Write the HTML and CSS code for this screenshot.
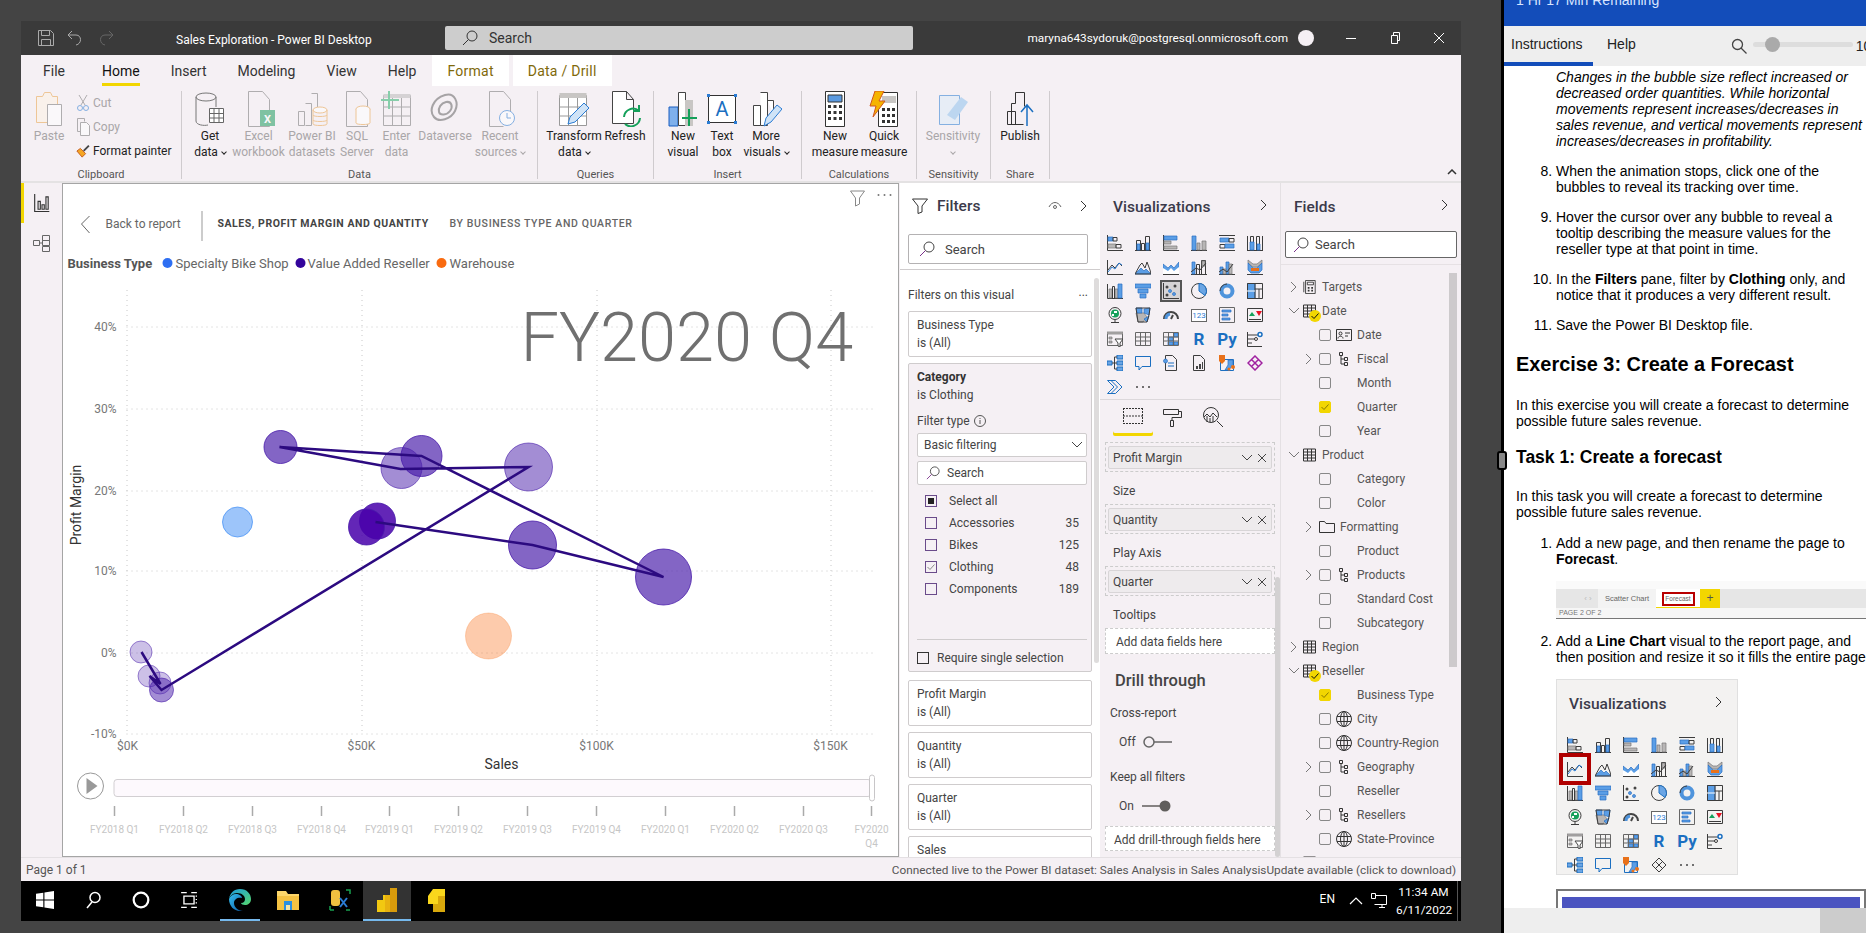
FILE: index.html
```html
<!DOCTYPE html>
<html lang="en">
<head>
    <meta charset="UTF-8">
    <title>Sales Exploration - Power BI Desktop</title>
    <link rel="stylesheet" href="styles.css">
</head>
<body>
<svg class="defs" width="0" height="0">
    <!-- visualization gallery -->
    <symbol id="v-sbar" viewBox="0 0 16 16"><path class="i-l" d="M.5 0v15.500H16"/><path class="i-b" d="M1 2h5v4H1z"/><path class="i-l" d="M6 2.500h4v3.500H6z"/><path class="i-g" d="M1 9h8v4H1z"/><path class="i-l" d="M9 9.500h5v3.500H9z"/></symbol>
    <symbol id="v-scol" viewBox="0 0 16 16"><path class="i-l" d="M0 15.500h16"/><path class="i-l" d="M1.500 5.500h4v10h-4zM10.500 1.500h4v14h-4z"/><path class="i-b" d="M2 9h3v6H2zM11 8h3v7h-3z"/><path class="i-l" d="M6.500 8.500h3v7h-3z"/></symbol>
    <symbol id="v-cbar" viewBox="0 0 16 16"><path class="i-l" d="M.5 0v15.500H16"/><path class="i-b" d="M1 1h13v4H1z"/><path class="i-g" d="M1 6h7v3H1z"/><path class="i-g" d="M1 11h13v3H1z"/></symbol>
    <symbol id="v-ccol" viewBox="0 0 16 16"><path class="i-l" d="M0 15.500h16"/><path class="i-b" d="M1 1h4v14H1z"/><path class="i-g" d="M6 8h3v7H6zM11 6h4v9h-4z"/></symbol>
    <symbol id="v-pbar" viewBox="0 0 16 16"><path class="i-l" d="M0 .5h16M0 15.500h16"/><path class="i-b" d="M1 3h9v4H1z"/><path class="i-l" d="M10 3.500h5v3.500h-5zM1 9.500h5v3.500H1z"/><path class="i-b" d="M6 9h9v4H6z"/></symbol>
    <symbol id="v-pcol" viewBox="0 0 16 16"><path class="i-l" d="M0 15.500h16M.5 1v14M15.500 1v14"/><path class="i-l" d="M3.500 1.500h3v14h-3zM9.500 1.500h3v14h-3z"/><path class="i-b" d="M3 7h4v8H3zM10 9h3v6h-3z"/></symbol>
    <symbol id="v-line" viewBox="0 0 16 16"><path class="i-l" d="M.5 1v14.500H16"/><path class="i-l" d="M1 11l4-5 3 3 4-5 3 3"/><path class="i-ll" d="M1 13l4-5 3 2 4-6 3 2"/></symbol>
    <symbol id="v-area" viewBox="0 0 16 16"><path class="i-b" d="M0 15l6-6 3 3 2-2 5 5z"/><path class="i-l" d="M0 15l5-9 2-2 3 5 2-6 3 8 1 4z"/></symbol>
    <symbol id="v-sarea" viewBox="0 0 16 16"><path class="i-b" d="M0 5l5 4 3-3 3 3 5-6v12H0z"/><path class="i-w" d="M0 9l5 3 3-3 3 3 5-4v8H0z"/><path class="i-l" d="M0 15.500h16"/></symbol>
    <symbol id="v-lcol" viewBox="0 0 16 16"><path class="i-l" d="M0 15.500h16"/><path class="i-b" d="M1 3h3v12H1z"/><path class="i-l" d="M5.500 5.500h3v10h-3zM10.500 1.500h4v14h-4z"/><path class="i-g" d="M11 2h3v5h-3z"/><path class="i-l" d="M0 13l5-4 4 2 6-7"/></symbol>
    <symbol id="v-lclu" viewBox="0 0 16 16"><path class="i-l" d="M0 15.500h16"/><path class="i-b" d="M1 8h3v7H1zM7 3h3v12H7z"/><path class="i-g" d="M4 10h3v5H4zM10 5h3v10h-3z"/><path class="i-l" d="M0 13l4-3 4 3 6-8"/></symbol>
    <symbol id="v-ribbon" viewBox="0 0 16 16"><path class="i-l" d="M0 15.500h16"/><path class="i-g" d="M1 1l5 4h4l5-4v3l-5 4H6L1 4z"/><path class="i-b" d="M1 4l5 5h4l5-5v7l-3 3H4l-3-3z"/><path class="i-o" d="M4 9h8v3H4z"/></symbol>
    <symbol id="v-water" viewBox="0 0 16 16"><path class="i-l" d="M.5 1v14.500H16"/><path class="i-g" d="M2 6h3v9H2zM8 6h3v9H8z"/><path class="i-l" d="M5.500 3.500h2v12h-2z"/><path class="i-b" d="M11 1h4v14h-4z"/></symbol>
    <symbol id="v-funnel" viewBox="0 0 16 16"><path class="i-b" d="M0 1h16v4H0zM3 6h10v4H3zM5 11h6v4H5z"/></symbol>
    <symbol id="v-scatter" viewBox="0 0 16 16"><path class="i-l" d="M.5 0v15.500H16"/><circle class="i-d" cx="4" cy="12" r="1.500"/><circle class="i-b" cx="7" cy="8" r="1.500"/><circle class="i-b" cx="11" cy="11" r="1.500"/><circle class="i-d" cx="4" cy="4" r="1.500"/><circle class="i-d" cx="12" cy="3" r="1.500"/></symbol>
    <symbol id="v-pie" viewBox="0 0 16 16"><circle class="i-l" cx="8" cy="8" r="7.500"/><path class="i-bs" d="M8 .5a7.500 7.500 0 0 1 6 12L8 8z"/></symbol>
    <symbol id="v-donut" viewBox="0 0 16 16"><circle class="i-dn" cx="8" cy="8" r="5.500"/><path class="i-l" d="M8 1a7 7 0 0 0-7 7"/></symbol>
    <symbol id="v-tree" viewBox="0 0 16 16"><path class="i-b" d="M0 0h8v16H0z"/><path class="i-l" d="M.5.5h15v15H.5zM8 .5v15M8 6h7.500M12 6v10"/><path class="i-lw" d="M0 8h8"/></symbol>
    <symbol id="v-globe" viewBox="0 0 16 16"><circle class="i-l" cx="8" cy="6.500" r="6"/><circle class="i-gn" cx="8" cy="6.500" r="4"/><path class="i-w" d="M7 4h3v2H7zM5 7h2v2H5z"/><path class="i-l" d="M4 15.500h8M8 13v2"/></symbol>
    <symbol id="v-fmap" viewBox="0 0 16 16"><path class="i-g" d="M1 6h8l3 4-4 5H3z"/><path class="i-b" d="M1 1h6v5H2zM9 2l6-1-1 7-5-2zM9 12l5-3-2 6z"/><path class="i-l" d="M1 1h14l-1 7-2 7H3z"/></symbol>
    <symbol id="v-gauge" viewBox="0 0 16 16"><path class="i-l2" d="M1 12a7 7 0 0 1 14 0"/><path class="i-b2" d="M3 12a5 5 0 0 1 4-5"/><path class="i-l2" d="M8 12l2-4"/></symbol>
    <symbol id="v-mcard" viewBox="0 0 16 16"><path class="i-lg" d="M.5.5h15v15H.5z"/><path class="i-b" d="M3 3h9v2H3zM3 7h6v2H3zM3 11h8v2H3z"/></symbol>
    <symbol id="v-kpi" viewBox="0 0 16 16"><path class="i-l" d="M.5 1.500h15v13H.5zM2 12.500h12"/><path class="i-gf" d="M2 9l3-4 3 4z"/><path class="i-rf" d="M9 4h6l-3 5z"/></symbol>
    <symbol id="v-slicer" viewBox="0 0 16 16"><path class="i-lg" d="M.5 1.500h15v13H.5z"/><path class="i-g" d="M0 1h16v2H0zM2 6h3v2H2zM2 10h3v2H2z"/><path class="i-lf" d="M8 8h8l-3 4v4l-2-1v-3z"/></symbol>
    <symbol id="v-table" viewBox="0 0 16 16"><path class="i-lg" d="M.5 1.500h15v13H.5zM.5 6h15M.5 10h15M5.500 1.500v13M10.500 1.500v13"/></symbol>
    <symbol id="v-matrix" viewBox="0 0 16 16"><path class="i-b" d="M5 6h5v4H5zM11 2h4v4h-4zM5 11h5v3H5zM11 11h4v3h-4z"/><path class="i-lg" d="M.5 1.500h15v13H.5zM.5 6h15M.5 10h15M5.500 1.500v13M10.500 1.500v13"/></symbol>
    <symbol id="v-key" viewBox="0 0 16 16"><path class="i-l" d="M.5 1v14.500H15M1 4h11M1 8h7M1 12h4"/><circle class="i-bc" cx="13" cy="3.500" r="2"/><circle class="i-l" cx="9" cy="8" r="1.500"/></symbol>
    <symbol id="v-decomp" viewBox="0 0 16 16"><path class="i-bs" d="M0 6h5v4H0zM10 0h6v4h-6zM10 6h6v4h-6zM10 12h6v4h-6z"/><path class="i-l" d="M5 8h5M7.500 2v12M7.500 2H10M7.500 14H10"/></symbol>
    <symbol id="v-speech" viewBox="0 0 16 16"><path class="i-ls" d="M.5 1.500h15v10H7l-3 3.500v-3.500H.5z"/></symbol>
    <symbol id="v-narr" viewBox="0 0 16 16"><path class="i-l" d="M2.500.5h7l4 4v11h-11z"/><path class="i-ls" d="M5 8h6M5 11h6"/><circle class="i-b" cx="2.500" cy="6" r="2"/></symbol>
    <symbol id="v-page" viewBox="0 0 16 16"><path class="i-l" d="M2.500.5h7l4 4v11h-11z"/><path class="i-d" d="M5 11h2v3H5zM8 9h2v5H8zM11 7h1v7h-1z"/></symbol>
    <symbol id="v-arc" viewBox="0 0 16 16"><path class="i-ls" d="M1.500 4.500h13v11h-13z"/><path class="i-b" d="M9 5l5 0v4l-4 6H6l3-5z"/><path class="i-o" d="M0 0h6v6L3 9 0 6z"/><circle class="i-o" cx="14" cy="12" r="2"/><circle class="i-o" cx="10" cy="14" r="1.500"/></symbol>
    <symbol id="v-apps" viewBox="0 0 16 16"><path class="i-pk" d="M8 1l7 7-7 7-7-7zM4.500 4.500l7 7M11.500 4.500l-7 7"/></symbol>
    <symbol id="v-diamond" viewBox="0 0 16 16"><path class="i-l" d="M8 1l7 7-7 7-7-7zM4.500 4.500l7 7M11.500 4.500l-7 7"/></symbol>
    <symbol id="v-auto" viewBox="0 0 16 16"><path class="i-ls" d="M.5 1.500h8L15 8l-6.500 6.500h-8L7 8z"/><path class="i-ls" d="M4 1.500l6.500 6.500L4 14.500"/></symbol>
    <symbol id="v-more" viewBox="0 0 16 16"><circle class="i-d" cx="2" cy="8" r="1"/><circle class="i-d" cx="8" cy="8" r="1"/><circle class="i-d" cx="14" cy="8" r="1"/></symbol>

    <!-- fields and panes -->
    <symbol id="i-chev-r" viewBox="0 0 12 12"><path d="M3 1l5 5-5 5" fill="none" stroke="currentColor"/></symbol>
    <symbol id="i-chev-d" viewBox="0 0 12 12"><path d="M1 3l5 5 5-5" fill="none" stroke="currentColor"/></symbol>
    <symbol id="i-x" viewBox="0 0 12 12"><path d="M2 2l8 8M10 2l-8 8" fill="none" stroke="currentColor"/></symbol>
    <symbol id="i-search" viewBox="0 0 16 16"><circle cx="10" cy="6" r="5" fill="none" stroke="#444"/><path d="M6.500 9.500L1 15" stroke="#7a2f8a" fill="none"/></symbol>
    <symbol id="i-funnel" viewBox="0 0 16 16"><path d="M.5 1h15L10 8v6l-4 1.500V8z" fill="none" stroke="currentColor"/></symbol>
    <symbol id="i-tbl" viewBox="0 0 13 13"><path d="M.5.5h12v12H.5zM.5 3.500h12M.5 6.500h12M.5 9.500h12M4.500.5v12M8.500.5v12" fill="none" stroke="#333"/></symbol>
    <symbol id="i-calc" viewBox="0 0 14 16"><path d="M2.500.5h11v15h-11zM.5 2v12" fill="none" stroke="#333"/><path d="M4.500 2.500h7v3h-7z" fill="none" stroke="#333"/><path d="M5 8h2v2H5zM9 8h2v2H9zM5 11h2v2H5zM9 11h2v2H9z" fill="#333"/></symbol>
    <symbol id="i-hier" viewBox="0 0 12 14"><path d="M1.500.5h3v3h-3zM6.500 5.500h3v3h-3zM6.500 10.500h3v3h-3zM3 3.500V12h3.500M3 7h3.500" fill="none" stroke="#333"/></symbol>
    <symbol id="i-folder" viewBox="0 0 16 12"><path d="M.5 11.500V.5h5l1.500 2h8.500v9z" fill="none" stroke="#333"/></symbol>
    <symbol id="i-globe" viewBox="0 0 16 16"><circle cx="8" cy="8" r="7.500" fill="none" stroke="#333"/><ellipse cx="8" cy="8" rx="3.500" ry="7.500" fill="none" stroke="#333"/><path d="M1 5.500h14M1 10.500h14M8 .5v15" fill="none" stroke="#333"/></symbol>
    <symbol id="i-idcard" viewBox="0 0 16 12"><path d="M.5.5h15v11H.5z" fill="none" stroke="#333"/><circle cx="4.500" cy="4.500" r="1.500" fill="none" stroke="#333"/><path d="M2 9.500c0-3 5-3 5 0M9 4h5M9 7h3" fill="none" stroke="#333"/></symbol>
    <symbol id="i-check" viewBox="0 0 12 12"><path d="M2.500 6l2.500 2.500 4.500-5" fill="none" stroke="currentColor"/></symbol>
</svg>

<div class="desktop">
    <div class="pbi">
        <header class="titlebar">
            <svg class="tb-ico" viewBox="0 0 16 16"><path d="M.5.5h12l3 3v12H.5zM3.500.5v5h8v-5M3.500 15.500v-6h9v6" fill="none" stroke="#aaa"/></svg>
            <svg class="tb-ico tb-undo" viewBox="0 0 16 16"><path d="M5 1L1 5l4 4M1 5h8c6 0 6 9 0 10" fill="none" stroke="#aaa"/></svg>
            <svg class="tb-ico tb-redo" viewBox="0 0 16 16"><path d="M11 1l4 4-4 4M15 5H7c-6 0-6 9 0 10" fill="none" stroke="#666"/></svg>
            <span class="tb-title">Sales Exploration - Power BI Desktop</span>
            <div class="tb-search">
                <svg class="tb-lens" viewBox="0 0 16 16"><circle cx="10" cy="6" r="5" fill="none" stroke="#333"/><path d="M6.500 9.500L1 15" stroke="#333"/></svg>
                <span>Search</span>
            </div>
            <span class="tb-user">maryna643sydoruk@postgresql.onmicrosoft.com</span>
            <span class="tb-avatar"></span>
            <span class="tb-ctl"><svg viewBox="0 0 12 12"><path d="M1 6.500h10" stroke="#fff"/></svg></span>
            <span class="tb-ctl"><svg viewBox="0 0 12 12"><path d="M2.500 3.500h6v8h-6zM4.500 3.500v-3h6v8h-2" fill="none" stroke="#fff"/></svg></span>
            <span class="tb-ctl"><svg viewBox="0 0 12 12"><path d="M1 1l10 10M11 1L1 11" stroke="#fff"/></svg></span>
        </header>

        <nav class="ribbon-tabs">
            <span class="rtab">File</span>
            <span class="rtab rtab-home">Home</span>
            <span class="rtab">Insert</span>
            <span class="rtab">Modeling</span>
            <span class="rtab">View</span>
            <span class="rtab">Help</span>
            <span class="rtab rtab-ctx rtab-format">Format</span>
            <span class="rtab rtab-ctx rtab-drill">Data / Drill</span>
        </nav>

        <div class="ribbon">
            <section class="rgroup g-clip">
                <div class="rbtns">
                    <div class="rbtn w44 off">
                        <svg class="ricon" viewBox="0 0 32 36"><path d="M3.500 5.500h6l2-4h6l2 4h5v8h-6v18h-15z" fill="#fdf3e4" stroke="#e9a44c"/><path d="M14.500 13.500h14v21h-14z" fill="#fff" stroke="#777"/></svg>
                        <span>Paste</span>
                    </div>
                    <div class="rsmall">
                        <div class="rs-row off"><svg viewBox="0 0 14 18"><path d="M3 1l6 10M11 1L5 11" stroke="#777" fill="none"/><circle cx="4" cy="14" r="2.500" fill="none" stroke="#2b7cd3"/><circle cx="10" cy="14" r="2.500" fill="none" stroke="#2b7cd3"/></svg><span>Cut</span></div>
                        <div class="rs-row off"><svg viewBox="0 0 14 18"><path d="M1.500.5h7v3M1.500.5v13h3" fill="none" stroke="#777"/><path d="M4.500 4.500h6l3 3v10h-9z" fill="#fff" stroke="#777"/></svg><span>Copy</span></div>
                        <div class="rs-row"><svg viewBox="0 0 16 16"><path d="M1 8l6 7 4-4-6-6z" fill="#f5a623" stroke="#c0561c"/><path d="M8 7l6-6 1.500 1.500-6 6z" fill="#444"/></svg><span>Format painter</span></div>
                    </div>
                </div>
                <div class="rlabel">Clipboard</div>
            </section>

            <section class="rgroup g-data">
                <div class="rbtns">
                    <div class="rbtn w44">
                        <svg class="ricon" viewBox="0 0 32 36"><ellipse cx="12" cy="6" rx="10" ry="4" fill="none" stroke="#777"/><path d="M2 6v24c0 4 8 5 12 4M22 6v10" fill="none" stroke="#777"/><path d="M15.500 17.500h14v14h-14zM15.500 22.500h14M15.500 27h14M20 17.500v14M25 17.500v14" fill="#fff" stroke="#666"/></svg>
                        <span>Get<br>data<i class="caret"></i></span>
                    </div>
                    <div class="rbtn w53 off">
                        <svg class="ricon" viewBox="0 0 32 36"><path d="M5.500.5h14l7 8v27h-21z" fill="none" stroke="#777"/><path d="M17 19h15v16H17z" fill="#1f9d60"/><text class="xls" x="24.500" y="32" text-anchor="middle">X</text></svg>
                        <span>Excel<br>workbook</span>
                    </div>
                    <div class="rbtn w54 off">
                        <svg class="ricon" viewBox="0 0 32 36"><path d="M15.500 2.500h6v14M9.500 12.500h6v22h-6M2.500 20.500h6v14h-6z" fill="none" stroke="#777"/><ellipse cx="24" cy="19" rx="7" ry="3" fill="#fff" stroke="#e9a44c"/><path d="M17 19v14c0 2 14 2 14 0V19M17 24c0 2 14 2 14 0M17 29c0 2 14 2 14 0" fill="none" stroke="#e9a44c"/></svg>
                        <span>Power BI<br>datasets</span>
                    </div>
                    <div class="rbtn w36 off">
                        <svg class="ricon" viewBox="0 0 32 36"><path d="M5.500.5h14l7 8v27h-21z" fill="none" stroke="#777"/><ellipse cx="22" cy="18" rx="7" ry="3" fill="#fff" stroke="#e9a44c"/><path d="M15 18v14c0 2 14 2 14 0V18" fill="#fff" stroke="#e9a44c"/></svg>
                        <span>SQL<br>Server</span>
                    </div>
                    <div class="rbtn w43 off">
                        <svg class="ricon" viewBox="0 0 32 36"><path d="M2.500 4.500h27v30h-27zM2.500 16h27M2.500 25h27M11.500 4.500v30M20.500 4.500v30" fill="none" stroke="#777"/><path d="M2.500 3h27v4h-27z" fill="#bbb"/><path d="M8 0v18M0 9h18" stroke="#2fb36f" stroke-width="2"/></svg>
                        <span>Enter<br>data</span>
                    </div>
                    <div class="rbtn w54 off">
                        <svg class="ricon" viewBox="0 0 32 36"><path d="M16 4c10-3 14 8 10 16s-16 12-21 6S3 8 16 4z" fill="none" stroke="#666" stroke-width="2"/><path d="M17 11c6-1 7 5 4 9s-10 5-11 1 2-9 7-10z" fill="none" stroke="#666" stroke-width="2"/></svg>
                        <span>Dataverse</span>
                    </div>
                    <div class="rbtn w56 off">
                        <svg class="ricon" viewBox="0 0 32 36"><path d="M5.500.5h14l7 8v14M5.500.5v35h14" fill="none" stroke="#777"/><circle cx="23" cy="27" r="7.500" fill="#fff" stroke="#2b7cd3"/><path d="M23 22v5h4" fill="none" stroke="#2b7cd3"/></svg>
                        <span>Recent<br>sources<i class="caret"></i></span>
                    </div>
                </div>
                <div class="rlabel">Data</div>
            </section>

            <section class="rgroup g-queries">
                <div class="rbtns">
                    <div class="rbtn w60">
                        <svg class="ricon" viewBox="0 0 32 36"><path d="M1.500 4.500h27v30h-27zM1.500 16h27M1.500 25h27M10.500 4.500v30M19.500 4.500v30" fill="#fff" stroke="#999"/><path d="M1.500 2h27v5h-27z" fill="#c8c6c4"/><path d="M10 33l2-7 14-14 5 5-14 14z" fill="#cfe3f7" stroke="#2b7cd3"/></svg>
                        <span>Transform<br>data<i class="caret"></i></span>
                    </div>
                    <div class="rbtn w42">
                        <svg class="ricon" viewBox="0 0 32 36"><path d="M3.500.5h14l7 8v24h-21zM17.500.5v8h7" fill="#fff" stroke="#444"/><path d="M15 26a9 9 0 0 1 15-6M31 27a9 9 0 0 1-15 6M30 14v6h-6" fill="none" stroke="#14a05a" stroke-width="2"/></svg>
                        <span>Refresh</span>
                    </div>
                </div>
                <div class="rlabel">Queries</div>
            </section>

            <section class="rgroup g-insert">
                <div class="rbtns">
                    <div class="rbtn w46">
                        <svg class="ricon" viewBox="0 0 32 36"><path d="M2 16h9v19H2z" fill="#7fb0ec" stroke="#1b5fc1"/><path d="M11.500 1.500h7v33h-7z" fill="#fff" stroke="#444"/><path d="M18 9h8v26h-8z" fill="#c8c6c4"/><path d="M22 18v17M15 27h15" stroke="#14a05a" stroke-width="2"/></svg>
                        <span>New<br>visual</span>
                    </div>
                    <div class="rbtn w32">
                        <svg class="ricon" viewBox="0 0 32 36"><path d="M2.500 4.500h27v27h-27z" fill="#fff" stroke="#333"/><path d="M1 3h3v3H1zM28 3h3v3h-3zM1 30h3v3H1zM28 30h3v3h-3z" fill="#2b7cd3"/><text class="tbx" x="16" y="25" text-anchor="middle">A</text></svg>
                        <span>Text<br>box</span>
                    </div>
                    <div class="rbtn w56">
                        <svg class="ricon" viewBox="0 0 32 36"><path d="M10.500 1.500h7v33h-7M3.500 14.500h7v20h-7zM17.500 9.500h6v14" fill="#fff" stroke="#444"/><path d="M14 35l2-8 11-13 5 4-11 13z" fill="#cfe3f7" stroke="#2b7cd3"/></svg>
                        <span>More<br>visuals<i class="caret"></i></span>
                    </div>
                </div>
                <div class="rlabel">Insert</div>
            </section>

            <section class="rgroup g-calc">
                <div class="rbtns">
                    <div class="rbtn w54">
                        <svg class="ricon" viewBox="0 0 32 36"><path d="M6.500.5h19v35h-19z" fill="#fff" stroke="#333"/><path d="M9 4h14v7H9z" fill="#5b9ae0" stroke="#333"/><path d="M9 14h3v3H9zM14.500 14h3v3h-3zM20 14h3v3h-3zM9 20h3v3H9zM14.500 20h3v3h-3zM20 20h3v3h-3zM9 26h3v3H9zM14.500 26h3v3h-3zM20 26h3v3h-3z" fill="#333"/></svg>
                        <span>New<br>measure</span>
                    </div>
                    <div class="rbtn w44">
                        <svg class="ricon" viewBox="0 0 32 36"><path d="M10.500 1.500h19v34h-19z" fill="#fff" stroke="#333"/><path d="M14 5h14v7H14z" fill="#c8c6c4"/><path d="M14 17h3v3h-3zM19 17h3v3h-3zM24 17h3v3h-3zM14 23h3v3h-3zM19 23h3v3h-3zM24 23h3v3h-3zM14 29h3v3h-3zM19 29h3v3h-3zM24 29h3v3h-3z" fill="#333"/><path d="M7 0h9l-5 10h6L5 26l3-11H2z" fill="#f5b400" stroke="#d1561c"/></svg>
                        <span>Quick<br>measure</span>
                    </div>
                </div>
                <div class="rlabel">Calculations</div>
            </section>

            <section class="rgroup g-sens">
                <div class="rbtns">
                    <div class="rbtn w60 off">
                        <svg class="ricon" viewBox="0 0 32 36"><path d="M2.500 4.500h20v29h-20z" fill="#dcecf9" stroke="#2b7cd3"/><path d="M10 24L24 6l7 5-13 18z" fill="#8fc2ee"/></svg>
                        <span>Sensitivity<br><i class="caret caret-solo"></i></span>
                    </div>
                </div>
                <div class="rlabel">Sensitivity</div>
            </section>

            <section class="rgroup g-share">
                <div class="rbtns">
                    <div class="rbtn w46">
                        <svg class="ricon" viewBox="0 0 32 36"><path d="M11.500 12.500v-11h9v14M11.500 12.500h-4v21h12M3.500 20.500h8v13h-8z" fill="none" stroke="#333"/><path d="M23 35V14M17 21l6-7 6 7" fill="none" stroke="#1b6fc1" stroke-width="1.500"/></svg>
                        <span>Publish</span>
                    </div>
                </div>
                <div class="rlabel">Share</div>
            </section>
            <svg class="r-collapse" viewBox="0 0 10 6"><path d="M1 5l4-4 4 4" fill="none" stroke="#333" stroke-width="1.500"/></svg>
        </div>

        <main class="workspace">
            <aside class="sidenav">
                <div class="nav-item nav-active">
                    <svg viewBox="0 0 14 16"><path d="M.5 0v15.500h13M3.500 6.500h2v7h-2zM7 9.500h2v4H7zM10.500 2.500h2v11h-2z" fill="none" stroke="#333"/></svg>
                </div>
                <div class="nav-item">
                    <svg viewBox="0 0 18 18"><path d="M.5 6.500h6v5h-6zM9.500 1.500h7v5h-7zM9.500 6.500h7v5h-7zM9.500 12.500h7v5h-7zM6.500 9h3" fill="none" stroke="#666"/></svg>
                </div>
            </aside>

            <div class="canvas">
                <svg class="chart" viewBox="63 184 834 672">
                    <g class="tool-ico">
                        <path d="M850 191h14l-5 7v6l-4 2v-8z" fill="none" stroke="#888"/>
                        <circle cx="878" cy="195" r="1" fill="#777"/><circle cx="884" cy="195" r="1" fill="#777"/><circle cx="890" cy="195" r="1" fill="#777"/>
                    </g>
                    <path d="M89 216l-8 8 8 9" fill="none" stroke="#666"/>
                    <text class="t-back" x="105" y="228">Back to report</text>
                    <path d="M201.500 211v30" stroke="#999"/>
                    <text class="t-head" x="217" y="227">SALES, PROFIT MARGIN AND QUANTITY</text>
                    <text class="t-sub" x="449" y="227">BY BUSINESS TYPE AND QUARTER</text>

                    <text class="t-leg-b" x="67" y="268">Business Type</text>
                    <circle cx="167" cy="263" r="5" fill="#2e6ff2"/>
                    <text class="t-leg" x="175" y="268">Specialty Bike Shop</text>
                    <circle cx="300" cy="263" r="5" fill="#33049c"/>
                    <text class="t-leg" x="307" y="268">Value Added Reseller</text>
                    <circle cx="441" cy="263" r="5" fill="#f96b10"/>
                    <text class="t-leg" x="449" y="268">Warehouse</text>

                    <g class="grid">
                        <path d="M126 327H872M126 409H872M126 491H872M126 571H872M126 653H872M126 734H872"/>
                        <path d="M126.500 290V734M361.500 290V734M596.500 290V734M830.500 290V734"/>
                    </g>
                    <text class="t-big" x="520" y="361">FY2020 Q4</text>

                    <g class="t-ax" text-anchor="end">
                        <text x="116" y="331">40%</text>
                        <text x="116" y="413">30%</text>
                        <text x="116" y="495">20%</text>
                        <text x="116" y="575">10%</text>
                        <text x="116" y="657">0%</text>
                        <text x="116" y="738">-10%</text>
                    </g>
                    <g class="t-ax" text-anchor="middle">
                        <text x="127" y="750">$0K</text>
                        <text x="361" y="750">$50K</text>
                        <text x="596" y="750">$100K</text>
                        <text x="830" y="750">$150K</text>
                    </g>
                    <text class="t-title" x="501" y="769" text-anchor="middle">Sales</text>
                    <text class="t-title" transform="translate(80 505) rotate(-90)" text-anchor="middle">Profit Margin</text>

                    <g class="bubbles">
                        <circle class="b-v1" cx="280" cy="447" r="16.500"/>
                        <circle class="b-v3" cx="401" cy="468" r="20.500"/>
                        <circle class="b-v1" cx="421" cy="456" r="20.500"/>
                        <circle class="b-v3" cx="528" cy="467" r="24"/>
                        <circle class="b-blue" cx="237" cy="522" r="15"/>
                        <circle class="b-v2" cx="377" cy="521" r="18"/>
                        <circle class="b-v2" cx="366" cy="527" r="18"/>
                        <circle class="b-v1" cx="532" cy="545" r="24"/>
                        <circle class="b-v1" cx="663" cy="577" r="28"/>
                        <circle class="b-or" cx="488" cy="636" r="23"/>
                        <circle class="b-v4" cx="140.500" cy="652" r="11"/>
                        <circle class="b-v4" cx="148.500" cy="676" r="11"/>
                        <circle class="b-v4" cx="159.500" cy="683" r="11"/>
                        <circle class="b-v3" cx="161" cy="690" r="12"/>
                    </g>
                    <polyline class="trail" points="141,652 160,684 149,676 161,690 528,467 400,469 279,447 421,456 663,577 532,545 375,522"/>

                    <circle cx="90" cy="786" r="13" fill="#fff" stroke="#999"/>
                    <path d="M86 778l11 8-11 8z" fill="#999"/>
                    <rect class="track" x="113.500" y="779.500" width="757" height="17" rx="3"/>
                    <rect class="thumb" x="869" y="775" width="5" height="26" rx="2.500"/>
                    <path class="ticks" d="M114 806v10M183 806v10M252 806v10M321 806v10M389 806v10M458 806v10M527 806v10M596 806v10M665 806v10M734 806v10M803 806v10M871 806v10"/>
                    <g class="t-play" text-anchor="middle">
                        <text x="114" y="833">FY2018 Q1</text>
                        <text x="183" y="833">FY2018 Q2</text>
                        <text x="252" y="833">FY2018 Q3</text>
                        <text x="321" y="833">FY2018 Q4</text>
                        <text x="389" y="833">FY2019 Q1</text>
                        <text x="458" y="833">FY2019 Q2</text>
                        <text x="527" y="833">FY2019 Q3</text>
                        <text x="596" y="833">FY2019 Q4</text>
                        <text x="665" y="833">FY2020 Q1</text>
                        <text x="734" y="833">FY2020 Q2</text>
                        <text x="803" y="833">FY2020 Q3</text>
                        <text x="871" y="833">FY2020</text>
                        <text x="871" y="847">Q4</text>
                    </g>
                </svg>
            </div>

            <aside class="filters">
                <div class="f-head">
                    <svg class="f-funnel"><use href="#i-funnel"/></svg>
                    <span class="pane-title">Filters</span>
                    <svg class="f-eye" viewBox="0 0 14 10"><path d="M1 6c3-6 9-6 12 0" fill="none" stroke="#666"/><circle cx="7" cy="6" r="1.500" fill="none" stroke="#666"/></svg>
                    <svg class="f-chev"><use href="#i-chev-r"/></svg>
                </div>
                <div class="f-search"><svg class="s-ico"><use href="#i-search"/></svg><span>Search</span></div>
                <div class="f-list">
                    <div class="f-caption"><span>Filters on this visual</span><span class="dots">...</span></div>
                    <div class="f-card">Business Type<br>is (All)</div>
                    <div class="f-card f-open">
                        <strong>Category</strong><br>is Clothing
                        <div class="f-type">Filter type <svg viewBox="0 0 12 12"><circle cx="6" cy="6" r="5.500" fill="none" stroke="#555"/><path d="M6 5v4M6 3v1" stroke="#555"/></svg></div>
                        <div class="f-select"><span>Basic filtering</span><svg><use href="#i-chev-d"/></svg></div>
                        <div class="f-search2"><svg class="s-ico"><use href="#i-search"/></svg><span>Search</span></div>
                        <ul class="f-items">
                            <li><span class="box box-part"></span><span class="it-name">Select all</span></li>
                            <li><span class="box"></span><span class="it-name">Accessories</span><span>35</span></li>
                            <li><span class="box"></span><span class="it-name">Bikes</span><span>125</span></li>
                            <li><span class="box box-on"><svg><use href="#i-check"/></svg></span><span class="it-name">Clothing</span><span>48</span></li>
                            <li><span class="box"></span><span class="it-name">Components</span><span>189</span></li>
                        </ul>
                        <div class="f-require"><span class="box box-k"></span><span>Require single selection</span></div>
                    </div>
                    <div class="f-card">Profit Margin<br>is (All)</div>
                    <div class="f-card">Quantity<br>is (All)</div>
                    <div class="f-card">Quarter<br>is (All)</div>
                    <div class="f-card">Sales</div>
                </div>
                <div class="f-scroll"></div>
            </aside>

            <aside class="viz">
                <div class="pane-head"><span class="pane-title">Visualizations</span><svg class="p-chev"><use href="#i-chev-r"/></svg></div>
                <div class="gallery">
                    <svg><use href="#v-sbar"/></svg><svg><use href="#v-scol"/></svg><svg><use href="#v-cbar"/></svg><svg><use href="#v-ccol"/></svg><svg><use href="#v-pbar"/></svg><svg><use href="#v-pcol"/></svg>
                    <svg><use href="#v-line"/></svg><svg><use href="#v-area"/></svg><svg><use href="#v-sarea"/></svg><svg><use href="#v-lcol"/></svg><svg><use href="#v-lclu"/></svg><svg><use href="#v-ribbon"/></svg>
                    <svg><use href="#v-water"/></svg><svg><use href="#v-funnel"/></svg><span class="g-sel"><svg><use href="#v-scatter"/></svg></span><svg><use href="#v-pie"/></svg><svg><use href="#v-donut"/></svg><svg><use href="#v-tree"/></svg>
                    <svg><use href="#v-globe"/></svg><svg><use href="#v-fmap"/></svg><svg><use href="#v-gauge"/></svg><span class="g-card">123</span><svg><use href="#v-mcard"/></svg><svg><use href="#v-kpi"/></svg>
                    <svg><use href="#v-slicer"/></svg><svg><use href="#v-table"/></svg><svg><use href="#v-matrix"/></svg><span class="g-code">R</span><span class="g-code">Py</span><svg><use href="#v-key"/></svg>
                    <svg><use href="#v-decomp"/></svg><svg><use href="#v-speech"/></svg><svg><use href="#v-narr"/></svg><svg><use href="#v-page"/></svg><svg><use href="#v-arc"/></svg><svg><use href="#v-apps"/></svg>
                    <svg><use href="#v-auto"/></svg><svg><use href="#v-more"/></svg>
                </div>
                <div class="viz-tabs">
                    <div class="vt vt-on"><svg viewBox="0 0 20 20"><path d="M0 1.500h20M0 9h20M0 16.500h20M.5 1v16M19.500 1v16" fill="none" stroke="#333" stroke-dasharray="2 1"/></svg></div>
                    <div class="vt"><svg viewBox="0 0 20 20"><path d="M.5 2.500h15v5H.5zM15.500 4.500h3v6H9v3M7.500 13.500h3v6h-3z" fill="none" stroke="#333"/></svg></div>
                    <div class="vt"><svg viewBox="0 0 20 20"><circle cx="8" cy="8" r="7.500" fill="none" stroke="#333"/><path d="M14 14l6 6M1 10l3-3 3 3 3-4 4 4M4 15V9M7 15v-4M10 15V9" fill="none" stroke="#333"/></svg></div>
                </div>
                <div class="well"><div class="pill"><span>Profit Margin</span><svg><use href="#i-chev-d"/></svg><svg><use href="#i-x"/></svg></div></div>
                <div class="w-label">Size</div>
                <div class="well"><div class="pill"><span>Quantity</span><svg><use href="#i-chev-d"/></svg><svg><use href="#i-x"/></svg></div></div>
                <div class="w-label">Play Axis</div>
                <div class="well"><div class="pill"><span>Quarter</span><svg><use href="#i-chev-d"/></svg><svg><use href="#i-x"/></svg></div></div>
                <div class="w-label">Tooltips</div>
                <div class="well well-add">Add data fields here</div>
                <div class="drill-head">Drill through</div>
                <div class="drill-label">Cross-report</div>
                <div class="toggle"><span>Off</span><svg viewBox="0 0 30 12"><circle cx="6" cy="6" r="5" fill="#f5f0f4" stroke="#666" stroke-width="1.500"/><path d="M11 6h18" stroke="#666" stroke-width="1.500"/></svg></div>
                <div class="drill-label drill-keep">Keep all filters</div>
                <div class="toggle toggle-on"><span>On</span><svg viewBox="0 0 30 12"><path d="M1 6h20" stroke="#605e5c" stroke-width="1.500"/><circle cx="24" cy="6" r="5.500" fill="#605e5c"/></svg></div>
                <div class="well well-add well-drill">Add drill-through fields here</div>
                <div class="v-scroll"></div>
            </aside>

            <aside class="fields">
                <div class="pane-head"><span class="pane-title">Fields</span><svg class="p-chev"><use href="#i-chev-r"/></svg></div>
                <div class="fd-search"><svg class="s-ico"><use href="#i-search"/></svg><span>Search</span></div>
                <div class="tree">
                    <div class="t-tbl"><svg class="chev"><use href="#i-chev-r"/></svg><svg class="ico"><use href="#i-calc"/></svg><span>Targets</span></div>
                    <div class="t-tbl"><svg class="chev"><use href="#i-chev-d"/></svg><span class="ico-wrap"><svg class="ico"><use href="#i-tbl"/></svg><i class="badge"><svg><use href="#i-check"/></svg></i></span><span>Date</span></div>
                    <div class="t-col"><b class="nochev"></b><span class="box"></span><svg class="cico"><use href="#i-idcard"/></svg><span>Date</span></div>
                    <div class="t-col"><svg class="chev"><use href="#i-chev-r"/></svg><span class="box"></span><svg class="cico"><use href="#i-hier"/></svg><span>Fiscal</span></div>
                    <div class="t-col"><b class="nochev"></b><span class="box"></span><b class="cico"></b><span>Month</span></div>
                    <div class="t-col"><b class="nochev"></b><span class="box box-y"><svg><use href="#i-check"/></svg></span><b class="cico"></b><span>Quarter</span></div>
                    <div class="t-col"><b class="nochev"></b><span class="box"></span><b class="cico"></b><span>Year</span></div>
                    <div class="t-tbl"><svg class="chev"><use href="#i-chev-d"/></svg><svg class="ico"><use href="#i-tbl"/></svg><span>Product</span></div>
                    <div class="t-col"><b class="nochev"></b><span class="box"></span><b class="cico"></b><span>Category</span></div>
                    <div class="t-col"><b class="nochev"></b><span class="box"></span><b class="cico"></b><span>Color</span></div>
                    <div class="t-col t-folder"><svg class="chev"><use href="#i-chev-r"/></svg><svg class="fold"><use href="#i-folder"/></svg><span>Formatting</span></div>
                    <div class="t-col"><b class="nochev"></b><span class="box"></span><b class="cico"></b><span>Product</span></div>
                    <div class="t-col"><svg class="chev"><use href="#i-chev-r"/></svg><span class="box"></span><svg class="cico"><use href="#i-hier"/></svg><span>Products</span></div>
                    <div class="t-col"><b class="nochev"></b><span class="box"></span><b class="cico"></b><span>Standard Cost</span></div>
                    <div class="t-col"><b class="nochev"></b><span class="box"></span><b class="cico"></b><span>Subcategory</span></div>
                    <div class="t-tbl"><svg class="chev"><use href="#i-chev-r"/></svg><svg class="ico"><use href="#i-tbl"/></svg><span>Region</span></div>
                    <div class="t-tbl"><svg class="chev"><use href="#i-chev-d"/></svg><span class="ico-wrap"><svg class="ico"><use href="#i-tbl"/></svg><i class="badge"><svg><use href="#i-check"/></svg></i></span><span>Reseller</span></div>
                    <div class="t-col"><b class="nochev"></b><span class="box box-y"><svg><use href="#i-check"/></svg></span><b class="cico"></b><span>Business Type</span></div>
                    <div class="t-col"><b class="nochev"></b><span class="box"></span><svg class="cico cico-g"><use href="#i-globe"/></svg><span>City</span></div>
                    <div class="t-col"><b class="nochev"></b><span class="box"></span><svg class="cico cico-g"><use href="#i-globe"/></svg><span>Country-Region</span></div>
                    <div class="t-col"><svg class="chev"><use href="#i-chev-r"/></svg><span class="box"></span><svg class="cico"><use href="#i-hier"/></svg><span>Geography</span></div>
                    <div class="t-col"><b class="nochev"></b><span class="box"></span><b class="cico"></b><span>Reseller</span></div>
                    <div class="t-col"><svg class="chev"><use href="#i-chev-r"/></svg><span class="box"></span><svg class="cico"><use href="#i-hier"/></svg><span>Resellers</span></div>
                    <div class="t-col"><b class="nochev"></b><span class="box"></span><svg class="cico cico-g"><use href="#i-globe"/></svg><span>State-Province</span></div>
                    <div class="t-tbl"><b class="chev"></b><svg class="ico"><use href="#i-tbl"/></svg></div>
                </div>
                <div class="fd-scroll"></div>
            </aside>
        </main>

        <footer class="statusbar">
            <span>Page 1 of 1</span>
            <span class="st-conn">Connected live to the Power BI dataset: Sales Analysis in Sales AnalysisUpdate available (click to download)</span>
        </footer>

        <div class="taskbar">
            <span class="tk"><svg viewBox="0 0 16 16"><path d="M0 2.500l6.500-1v6H0zM7.500 1.400L16 0v7.500H7.500zM0 8.500h6.500v6l-6.500-1zM7.500 8.500H16V16l-8.500-1.300z" fill="#fff"/></svg></span>
            <span class="tk"><svg viewBox="0 0 16 18"><circle cx="10" cy="6.500" r="5" fill="none" stroke="#fff" stroke-width="1.500"/><path d="M7 11L2 17" stroke="#fff" stroke-width="1.500"/></svg></span>
            <span class="tk"><svg viewBox="0 0 16 16"><circle cx="8" cy="8" r="6.500" fill="none" stroke="#fff" stroke-width="2"/></svg></span>
            <span class="tk"><svg viewBox="0 0 16 16"><path d="M3.500 4.500h9v7h-9zM1 1.500h5M10 1.500h5M1 14.500h5M10 14.500h5M14.500 4v1M14.500 7v1M14.500 10v1" fill="none" stroke="#fff" stroke-width="1.200"/></svg></span>
            <span class="tk tk-open"><svg class="tk-big" viewBox="0 0 24 24"><defs><linearGradient id="edge-a" x1="0" y1="0" x2="1" y2="1"><stop offset="0" stop-color="#35c1f1"/><stop offset="1" stop-color="#0c59a4"/></linearGradient><linearGradient id="edge-b" x1="0" y1="0" x2="1" y2="1"><stop offset="0" stop-color="#1b9de2"/><stop offset="1" stop-color="#56d66b"/></linearGradient></defs><path d="M12 1c7 0 11 5 11 10 0 4-3 6-6 6-2 0-4-1-4-2 3 0 4-2 4-4 0-3-3-6-8-6-4 0-7 3-8 6C2 5 6 1 12 1z" fill="url(#edge-b)"/><path d="M1 11c1-3 4-5 7-5 3 0 6 2 6 4-4-1-8 1-8 5 0 4 4 8 9 8-1 0-2 0-3 0C6 23 1 18 1 11z" fill="url(#edge-a)"/></svg></span>
            <span class="tk tk-files"><svg class="tk-big" viewBox="0 0 24 24"><path d="M1 3h9l2 3h11v16H1z" fill="#fcd66a"/><path d="M1 8h22v14H1z" fill="#f5c242"/><path d="M8 13h8v9H8z" fill="#2c8fe0"/><path d="M10 17h4v5h-4z" fill="#f5e4a8"/></svg></span>
            <span class="tk tk-tool"><svg class="tk-big" viewBox="0 0 24 24"><rect x="3" y="2" width="9" height="16" rx="3" fill="#f0c040"/><path d="M18 2h4v4M2 22v-4M2 22h4M22 22h-4" fill="none" stroke="#18a050" stroke-width="1.500"/><path d="M12 10l7 9M19 10l-7 9" stroke="#2b7cd3" stroke-width="2"/></svg></span>
            <span class="tk tk-active"><svg class="tk-big" viewBox="0 0 24 24"><path d="M2 12h6v12H2z" fill="#f2c811"/><path d="M8 7h7v17H8z" fill="#f2c811"/><path d="M15 0h7v24h-7z" fill="#d79a0c"/><path d="M10 7h5v17h-5z" fill="#e8b10f"/></svg></span>
            <span class="tk tk-last"><svg class="tk-big" viewBox="0 0 24 24"><path d="M4 8l5-7h12v23H9V16H4z" fill="#f9d71c"/><path d="M14 8h7v16h-7zM9 16h5v8H9z" fill="#d9a90c"/></svg></span>
            <div class="tray">
                <span class="tr-lang">EN</span>
                <svg class="tr-up" viewBox="0 0 14 8"><path d="M1 7l6-6 6 6" fill="none" stroke="#fff" stroke-width="1.200"/></svg>
                <svg class="tr-net" viewBox="0 0 16 16"><path d="M3.500 2.500h12v9h-12M3.500 2.500v3M8 14.500h6M11 11.500v3" fill="none" stroke="#fff"/><path d="M.5.5h4v5h-4z" fill="#000" stroke="#fff"/></svg>
                <div class="clock">11:34 AM<br>6/11/2022</div>
            </div>
        </div>
    </div>

    <div class="divider"><span class="grip"></span></div>

    <div class="lab">
        <div class="lab-top"><span>1 Hr 17 Min Remaining</span></div>
        <div class="lab-tabs">
            <span class="lt lt-on">Instructions</span>
            <span class="lt lt-help">Help</span>
            <svg class="lt-lens" viewBox="0 0 16 16"><circle cx="6.500" cy="6.500" r="5" fill="none" stroke="#444" stroke-width="1.300"/><path d="M10 10l5.500 5.500" stroke="#444" stroke-width="1.300"/></svg>
            <span class="lt-slider"><i></i></span>
            <span class="lt-pct">100%</span>
        </div>
        <div class="lab-body">
            <ol class="steps" start="7">
                <li class="carry"><em>Changes in the bubble size reflect increased or<br>decreased order quantities. While horizontal<br>movements represent increases/decreases in<br>sales revenue, and vertical movements represent<br>increases/decreases in profitability.</em></li>
                <li>When the animation stops, click one of the<br>bubbles to reveal its tracking over time.</li>
                <li>Hover the cursor over any bubble to reveal a<br>tooltip describing the measure values for the<br>reseller type at that point in time.</li>
                <li>In the <strong>Filters</strong> pane, filter by <strong>Clothing</strong> only, and<br>notice that it produces a very different result.</li>
                <li>Save the Power BI Desktop file.</li>
            </ol>
            <h2>Exercise 3: Create a Forecast</h2>
            <p>In this exercise you will create a forecast to determine<br>possible future sales revenue.</p>
            <h3>Task 1: Create a forecast</h3>
            <p>In this task you will create a forecast to determine<br>possible future sales revenue.</p>
            <ol class="steps steps2">
                <li>Add a new page, and then rename the page to<br><strong>Forecast</strong>.
                    <div class="shot-tabs">
                        <div class="st-row">
                            <span class="st-arrows">&lsaquo; &rsaquo;</span>
                            <span class="st-tab">Scatter Chart</span>
                            <span class="st-new"><span>Forecast</span></span>
                            <span class="st-add">+</span>
                        </div>
                        <div class="st-foot">PAGE 2 OF 2</div>
                    </div>
                </li>
                <li>Add a <strong>Line Chart</strong> visual to the report page, and<br>then position and resize it so it fills the entire page.
                    <div class="shot-viz">
                        <div class="sv-head"><span>Visualizations</span><svg><use href="#i-chev-r"/></svg></div>
                        <div class="sv-grid">
                            <svg><use href="#v-sbar"/></svg><svg><use href="#v-scol"/></svg><svg><use href="#v-cbar"/></svg><svg><use href="#v-ccol"/></svg><svg><use href="#v-pbar"/></svg><svg><use href="#v-pcol"/></svg>
                            <span class="sv-hl"><svg><use href="#v-line"/></svg></span><svg><use href="#v-area"/></svg><svg><use href="#v-sarea"/></svg><svg><use href="#v-lcol"/></svg><svg><use href="#v-lclu"/></svg><svg><use href="#v-ribbon"/></svg>
                            <svg><use href="#v-water"/></svg><svg><use href="#v-funnel"/></svg><svg><use href="#v-scatter"/></svg><svg><use href="#v-pie"/></svg><svg><use href="#v-donut"/></svg><svg><use href="#v-tree"/></svg>
                            <svg><use href="#v-globe"/></svg><svg><use href="#v-fmap"/></svg><svg><use href="#v-gauge"/></svg><span class="g-card">123</span><svg><use href="#v-mcard"/></svg><svg><use href="#v-kpi"/></svg>
                            <svg><use href="#v-slicer"/></svg><svg><use href="#v-table"/></svg><svg><use href="#v-matrix"/></svg><span class="g-code">R</span><span class="g-code">Py</span><svg><use href="#v-key"/></svg>
                            <svg><use href="#v-decomp"/></svg><svg><use href="#v-speech"/></svg><svg><use href="#v-arc"/></svg><svg><use href="#v-diamond"/></svg><svg><use href="#v-more"/></svg>
                        </div>
                    </div>
                    <div class="shot-next"><div></div></div>
                </li>
            </ol>
        </div>
        <div class="lab-bottom"><span></span></div>
    </div>
</div>
</body>
</html>
```

FILE: styles.css
```css
* {
    box-sizing: border-box;
}
html, body {
    margin: 0;
    height: 100%;
    overflow: hidden;
}
body {
    font-family: Roboto, "Open Sans", sans-serif;
    font-size: 12px;
    color: #444;
    background: #444;
}
.defs {
    position: absolute;
}

/* gallery icon paints */
.i-l { fill: none; stroke: #3c3c3c; }
.i-ll { fill: none; stroke: #2b7cd3; }
.i-lg { fill: none; stroke: #666; }
.i-ls { fill: none; stroke: #1b6fc1; }
.i-lw { fill: none; stroke: #fff; }
.i-lf { fill: #fff; stroke: #444; }
.i-l2 { fill: none; stroke: #444; stroke-width: 2; }
.i-b2 { fill: none; stroke: #4f94dc; stroke-width: 3; }
.i-b { fill: #5b9ee6; stroke: #2a6fc0; stroke-width: .7; }
.i-bs { fill: #6ba5e4; stroke: #1b6fc1; }
.i-bc { fill: #fff; stroke: #1b6fc1; stroke-width: 1.500; }
.i-dn { fill: none; stroke: #4f94dc; stroke-width: 4; }
.i-g { fill: #b8b6b6; stroke: #777; stroke-width: .7; }
.i-w { fill: #fff; }
.i-d { fill: #444; }
.i-o { fill: #e8711a; }
.i-gn { fill: #14a05a; }
.i-gf { fill: #14a05a; }
.i-rf { fill: #e81123; }
.i-pk { fill: none; stroke: #a020a0; stroke-width: 1.500; }
.xls { font: bold 11px Roboto, sans-serif; fill: #fff; }
.tbx { font: 20px Roboto, sans-serif; fill: #1b6fc1; }

.desktop {
    display: flex;
    width: 1866px;
    height: 933px;
}
.pbi {
    width: 1440px;
    margin: 21px 0 0 21px;
    height: 900px;
    display: flex;
    flex-direction: column;
    flex: none;
}

/* title bar */
.titlebar {
    height: 34px;
    flex: none;
    background: #3a3a3a;
    display: flex;
    align-items: center;
    padding-left: 17px;
    color: #fff;
}
.tb-ico {
    width: 16px;
    height: 16px;
    flex: none;
}
.tb-undo { margin-left: 13px; }
.tb-redo { margin-left: 15px; }
.tb-title {
    margin-left: 62px;
    width: 269px;
    font-size: 12px;
    padding-top: 3px;
}
.tb-search {
    width: 468px;
    height: 24px;
    background: #cdcdcd;
    border-radius: 2px;
    display: flex;
    align-items: center;
    color: #333;
    font-size: 14px;
    padding-left: 17px;
}
.tb-lens {
    width: 16px;
    height: 16px;
    margin-right: 11px;
}
.tb-user {
    margin-left: auto;
    margin-right: 10px;
    font-size: 11.800px;
}
.tb-avatar {
    width: 16px;
    height: 16px;
    border-radius: 50%;
    background: #f5f0f4;
    margin-right: 15px;
}
.tb-ctl {
    width: 44px;
    display: flex;
    justify-content: center;
}
.tb-ctl svg {
    width: 12px;
    height: 12px;
}

/* ribbon */
.ribbon-tabs {
    height: 31px;
    flex: none;
    background: #f5f0f4;
    display: flex;
    gap: 31px;
    padding-left: 22px;
    font-size: 14px;
    color: #333;
}
.rtab {
    display: flex;
    align-items: center;
    height: 31px;
}
.rtab-home {
    margin-left: 6px;
    color: #111;
    box-shadow: inset 0 -3px #f2d600;
}
.rtab-ctx {
    background: #fff;
    color: #80690a;
    padding: 0 15px;
    letter-spacing: .25px;
}
.rtab-format { margin-left: -15px; }
.rtab-drill { margin-left: -27px; }

.ribbon {
    height: 97px;
    flex: none;
    background: #f5f0f4;
    border-bottom: 2px solid #e4e2e3;
    display: flex;
    padding-top: 5px;
    position: relative;
}
.rgroup {
    height: 88px;
    border-right: 1px solid #cfcbce;
    display: flex;
    flex-direction: column;
    padding-left: 6px;
    flex: none;
}
.g-clip { width: 161px; }
.g-data { width: 356px; }
.g-queries { width: 116px; }
.g-insert { width: 148px; }
.g-calc { width: 115px; }
.g-sens { width: 74px; }
.g-share { width: 59px; }
.rbtns {
    display: flex;
    flex: 1;
}
.rbtn {
    display: flex;
    flex-direction: column;
    align-items: center;
    text-align: center;
    color: #222;
    line-height: 16px;
    white-space: nowrap;
}
.rbtn.off, .rs-row.off {
    color: #a9a6a8;
}
.off svg {
    opacity: .55;
}
.ricon {
    width: 32px;
    height: 36px;
    margin-bottom: 1px;
    flex: none;
}
.rbtn span { display: block; }
.w32 { width: 32px; }
.w36 { width: 36px; }
.w42 { width: 42px; }
.w43 { width: 43px; }
.w44 { width: 44px; }
.w46 { width: 46px; }
.w53 { width: 53px; }
.w54 { width: 54px; }
.w56 { width: 56px; }
.w60 { width: 60px; }
.caret {
    display: inline-block;
    width: 4px;
    height: 4px;
    margin: 0 0 2px 4px;
    border-right: 1px solid currentColor;
    border-bottom: 1px solid currentColor;
    transform: rotate(45deg);
}
.caret-solo { margin-left: 0; }
.rsmall {
    margin-left: 5px;
    display: flex;
    flex-direction: column;
}
.rs-row {
    height: 24px;
    display: flex;
    align-items: center;
    color: #222;
    white-space: nowrap;
}
.rs-row svg {
    width: 14px;
    height: 18px;
    margin-right: 3px;
    flex: none;
}
.rlabel {
    font-size: 11px;
    line-height: 12px;
    text-align: center;
    color: #555;
    margin-left: -6px;
    margin-bottom: -2px;
}
.r-collapse {
    position: absolute;
    right: 4px;
    bottom: 6px;
    width: 10px;
    height: 6px;
}

/* main area */
.workspace {
    height: 674px;
    flex: none;
    display: flex;
    background: #f5f0f4;
}
.sidenav {
    width: 41px;
    flex: none;
}
.nav-item {
    height: 40px;
    display: flex;
    align-items: center;
    justify-content: center;
}
.nav-item svg {
    width: 18px;
    height: 18px;
}
.nav-active {
    box-shadow: inset 3px 0 #f2d600;
}
.canvas {
    width: 837px;
    flex: none;
    background: #fff;
    border: 1px solid #a5a5a5;
}
.chart {
    display: block;
    width: 835px;
    height: 672px;
}
.chart text {
    font-family: Roboto, sans-serif;
}
.t-back { font-size: 12px; fill: #666; }
.t-head { font-size: 10.500px; font-weight: 700; letter-spacing: .55px; fill: #444; }
.t-sub { font-size: 10.500px; font-weight: 500; letter-spacing: .65px; fill: #666; }
.t-leg-b { font-size: 13px; font-weight: 700; fill: #555; }
.t-leg { font-size: 13px; fill: #666; }
.t-big { font-size: 68.500px; font-weight: 300; fill: #707070; }
.chart .t-ax { font-size: 12px; fill: #777; }
.chart .t-title { font-size: 14px; fill: #333; }
.grid path { fill: none; stroke: #c8c8c8; stroke-dasharray: 1 4; }
.b-v1 { fill: rgba(72, 28, 170, .68); stroke: rgba(72, 28, 170, .8); }
.b-v2 { fill: rgba(72, 0, 170, .85); stroke: rgba(72, 28, 170, .8); }
.b-v3 { fill: rgba(72, 28, 170, .5); stroke: rgba(72, 28, 170, .6); }
.b-v4 { fill: rgba(72, 28, 170, .28); stroke: rgba(72, 28, 170, .5); }
.b-blue { fill: rgba(60, 140, 245, .5); stroke: rgba(60, 140, 245, .7); }
.b-or { fill: rgba(249, 107, 16, .35); stroke: rgba(249, 107, 16, .25); }
.trail { fill: none; stroke: #2c0a80; stroke-width: 2.500; }
.track { fill: #fdf9fd; stroke: #d2cfd2; }
.thumb { fill: #fff; stroke: #c8c6c8; }
.ticks { stroke: #aaa; stroke-width: 1.500; fill: none; }
.chart .t-play { font-size: 10px; fill: #c6c6c6; }

/* filters pane */
.filters {
    width: 200px;
    flex: none;
    margin-left: 1px;
    background: #fff;
    position: relative;
    overflow: hidden;
    color: #444;
}
.f-head {
    height: 45px;
    margin-bottom: 6px;
    display: flex;
    align-items: center;
    padding-left: 12px;
}
.f-funnel {
    width: 16px;
    height: 16px;
    color: #333;
    margin-right: 9px;
}
.pane-title {
    font-size: 15.500px;
    font-weight: 500;
    color: #3b3a4a;
}
.f-eye {
    width: 14px;
    height: 10px;
    margin-left: auto;
}
.f-chev {
    width: 12px;
    height: 12px;
    margin: 0 10px 0 16px;
    color: #333;
}
.f-search, .fd-search {
    height: 30px;
    margin: 0 12px 0 8px;
    border: 1px solid #b4b2b3;
    border-radius: 2px;
    display: flex;
    align-items: center;
    padding-left: 10px;
    font-size: 13px;
}
.s-ico {
    width: 16px;
    height: 16px;
    margin-right: 10px;
    flex: none;
}
.f-list {
    margin-top: 5px;
    border-top: 1px solid #cfcccd;
    padding: 17px 8px 0;
}
.f-caption {
    display: flex;
    justify-content: space-between;
    line-height: 16px;
    margin-bottom: 8px;
    padding-right: 4px;
}
.dots { line-height: 10px; }
.f-card {
    border: 1px solid #cfcccd;
    border-radius: 2px;
    background: #fff;
    padding: 4px 4px 0 8px;
    height: 46px;
    line-height: 18px;
    margin-bottom: 6px;
}
.f-open {
    height: 309px;
    background: #f5f0f4;
    margin-bottom: 8px;
}
.f-open strong {
    font-weight: 700;
    color: #333;
}
.f-type {
    margin-top: 8px;
    display: flex;
    align-items: center;
    gap: 4px;
}
.f-type svg {
    width: 12px;
    height: 12px;
}
.f-select, .f-search2 {
    height: 24px;
    border: 1px solid #cfcccd;
    background: #fff;
    border-radius: 2px;
    display: flex;
    align-items: center;
    padding-left: 6px;
}
.f-select {
    margin-top: 3px;
    justify-content: space-between;
}
.f-select svg {
    width: 12px;
    height: 12px;
    margin-right: 3px;
}
.f-search2 {
    margin-top: 4px;
    padding-left: 8px;
}
.f-search2 .s-ico {
    width: 14px;
    height: 14px;
    margin-right: 7px;
}
.f-items {
    list-style: none;
    margin: 5px 0 0;
    padding: 0 8px;
}
.f-items li {
    height: 22px;
    display: flex;
    align-items: center;
}
.box {
    width: 12px;
    height: 12px;
    flex: none;
    border: 1px solid #6a4b8a;
    display: flex;
    align-items: center;
    justify-content: center;
}
.box svg {
    width: 12px;
    height: 12px;
    flex: none;
}
.box-part::after {
    content: "";
    width: 6px;
    height: 6px;
    background: #222;
}
.box-on {
    color: #8a8a8a;
}
.it-name {
    flex: 1;
    margin-left: 12px;
}
.f-require {
    margin-top: 39px;
    border-top: 1px solid #cfcccd;
    padding-top: 10px;
    display: flex;
    align-items: center;
    gap: 8px;
    line-height: 16px;
}
.box-k {
    border-color: #333;
}
.f-scroll {
    position: absolute;
    left: 194px;
    top: 95px;
    width: 5px;
    height: 385px;
    border-radius: 3px;
    background: #dedcdc;
}

/* visualizations pane */
.viz {
    width: 181px;
    flex: none;
    position: relative;
    overflow: hidden;
    background: #f5f0f4;
    border-right: 1px solid #e4e0e3;
}
.pane-head {
    height: 48px;
    display: flex;
    align-items: center;
    justify-content: space-between;
    padding: 0 10px 0 13px;
}
.p-chev {
    width: 12px;
    height: 12px;
    color: #333;
    margin-top: -4px;
}
.gallery, .sv-grid {
    display: grid;
    grid-template-columns: repeat(6, 28px);
    grid-auto-rows: 24px;
    place-items: center;
}
.gallery {
    padding-left: 1px;
    height: 169px;
    border-bottom: 1px solid #dcd8db;
}
.gallery svg, .sv-grid svg {
    width: 16px;
    height: 16px;
}
.g-card {
    width: 16px;
    height: 13px;
    border: 1px solid #666;
    background: #fff;
    font-size: 8px;
    line-height: 11px;
    text-align: center;
    color: #2b7cd3;
}
.g-code {
    font-size: 17px;
    line-height: 20px;
    font-weight: 700;
    color: #1b6fc1;
}
.g-sel {
    width: 22px;
    height: 22px;
    background: #d6d4d5;
    border: 2px solid #555;
    display: flex;
    align-items: center;
    justify-content: center;
}
.viz-tabs {
    height: 36px;
    display: flex;
    padding-left: 13px;
}
.vt {
    width: 40px;
    display: flex;
    justify-content: center;
    padding-top: 7px;
}
.vt svg {
    width: 20px;
    height: 20px;
}
.vt-on {
    box-shadow: inset 0 -3px #f2d600;
    border-radius: 0 0 2px 2px;
    height: 36px;
}
.well {
    margin: 6px 0 0 5px;
    width: 170px;
    height: 30px;
    border: 1px dashed #ccc;
    padding: 3px 2px;
}
.pill {
    height: 23px;
    background: #eeebed;
    border: 1px solid #d8d5d7;
    border-radius: 2px;
    display: flex;
    align-items: center;
    padding-left: 4px;
    color: #444;
}
.pill span {
    flex: 1;
}
.pill svg {
    width: 12px;
    height: 12px;
    margin-right: 3px;
    color: #444;
}
.w-label {
    margin: 10px 0 4px 13px;
    line-height: 18px;
}
.w-label + .well {
    margin-top: 0;
}
.well-add {
    height: 26px;
    padding: 0 0 0 10px;
    line-height: 27px;
    background: #fff;
}
.drill-head {
    margin: 17px 0 0 15px;
    font-size: 16.500px;
    line-height: 20px;
    font-weight: 500;
    color: #444;
}
.drill-label {
    margin: 13px 0 0 10px;
    line-height: 18px;
}
.drill-keep {
    margin-top: 17px;
}
.toggle {
    margin: 11px 0 0 19px;
    height: 18px;
    display: flex;
    align-items: center;
    gap: 7px;
}
.toggle svg {
    width: 30px;
    height: 12px;
}
.well-drill {
    margin-top: 11px;
    height: 25px;
    padding-left: 8px;
}
.v-scroll {
    position: absolute;
    left: 175px;
    top: 394px;
    width: 5px;
    height: 280px;
    background: #d3d1d2;
    border-radius: 3px;
}

/* fields pane */
.fields {
    width: 180px;
    flex: none;
    position: relative;
    overflow: hidden;
    background: #f5f0f4;
}
.fd-search {
    height: 27px;
    margin: 0 4px;
    background: #fff;
    border-color: #666;
    padding-left: 7px;
}
.fd-search .s-ico {
    margin-right: 6px;
}
.tree {
    margin-top: 6px;
    border-top: 1px solid #e6e1e4;
    padding-top: 10px;
}
.t-tbl, .t-col {
    height: 24px;
    display: flex;
    align-items: center;
    white-space: nowrap;
    color: #555;
}
.t-tbl {
    padding-left: 7px;
}
.t-col {
    padding-left: 22px;
}
.chev, .nochev {
    width: 12px;
    height: 12px;
    flex: none;
    color: #777;
}
.ico, .ico-wrap {
    width: 13px;
    height: 14px;
    margin: 0 6px 0 3px;
    flex: none;
    position: relative;
}
.ico-wrap .ico {
    margin: 0;
    display: block;
}
.badge {
    position: absolute;
    left: 6px;
    top: 6px;
    width: 12px;
    height: 12px;
    border-radius: 50%;
    background: #f2d600;
    color: #111;
}
.badge svg {
    display: block;
    width: 12px;
    height: 12px;
}
.t-col .box {
    margin-left: 4px;
    border: 1px solid #888;
    border-radius: 2px;
}
.box-y {
    background: #f2d600;
    color: #8a7a00;
}
.t-col .box-y {
    border-color: #f2d600;
}
.cico {
    width: 16px;
    height: 14px;
    margin: 0 5px;
    flex: none;
}
.cico-g {
    height: 16px;
}
.t-folder .fold {
    width: 16px;
    height: 12px;
    margin: 0 5px 0 4px;
    flex: none;
}
.fd-scroll {
    position: absolute;
    left: 168px;
    top: 90px;
    width: 8px;
    height: 394px;
    background: #cdcacc;
}

/* status and task bars */
.statusbar {
    height: 24px;
    flex: none;
    background: #f5f0f4;
    border-top: 1px solid #e4e0e3;
    display: flex;
    justify-content: space-between;
    align-items: center;
    padding: 0 5px;
    color: #555;
}
.st-conn {
    font-size: 11.800px;
}
.taskbar {
    height: 40px;
    flex: none;
    background: #000;
    display: flex;
    color: #fff;
}
.tk {
    width: 48px;
    flex: none;
    display: flex;
    align-items: center;
    justify-content: center;
    padding-bottom: 2px;
}
.tk svg {
    width: 18px;
    height: 18px;
}
.tk svg.tk-big {
    width: 24px;
    height: 24px;
}
.tk-open {
    width: 40px;
    margin-left: 7px;
    box-shadow: inset 0 -2px #76b9ed;
}
.tk-files, .tk-tool {
    margin-left: 4px;
}
.tk-active {
    margin-left: -1px;
    background: #333;
    box-shadow: inset 0 -2px #76b9ed;
}
.tk-last {
    margin-left: 1px;
}
.tray {
    margin-left: auto;
    display: flex;
    align-items: center;
    height: 40px;
}
.tr-lang {
    margin-right: 14px;
    padding-bottom: 5px;
}
.tr-up {
    width: 14px;
    height: 8px;
    margin-right: 8px;
}
.tr-net {
    width: 16px;
    height: 16px;
    margin-right: 9px;
}
.clock {
    width: 62px;
    padding: 2px 6px 0 0;
    text-align: center;
    font-size: 11.800px;
    line-height: 18px;
    border-right: 1px solid #555;
    height: 40px;
    white-space: nowrap;
    margin-right: 3px;
}

/* lab instructions */
.divider {
    flex: none;
    width: 3px;
    height: 933px;
    margin-left: 40px;
    background: #000;
    position: relative;
}
.grip {
    position: absolute;
    left: -4px;
    top: 451px;
    width: 10px;
    height: 19px;
    border: 2px solid #000;
    border-radius: 3px;
    background: #888;
}
.lab {
    width: 362px;
    height: 933px;
    flex: none;
    background: #fff;
    display: flex;
    flex-direction: column;
    overflow: hidden;
    font-family: "Liberation Sans", Arial, sans-serif;
    font-size: 14px;
    color: #000;
}
.lab-top {
    height: 26px;
    flex: none;
    background: #134dba;
    color: #d8e4ff;
    padding-left: 12px;
    overflow: hidden;
}
.lab-top span {
    display: block;
    margin-top: -8px;
    line-height: 16px;
}
.lab-tabs {
    height: 40px;
    flex: none;
    background: #eee;
    display: flex;
    align-items: center;
    white-space: nowrap;
    color: #222;
}
.lt {
    height: 40px;
    line-height: 36px;
    flex: none;
}
.lt-on {
    width: 89px;
    padding-left: 7px;
    box-shadow: inset 0 -4px #134dba;
}
.lt-help {
    margin-left: 14px;
}
.lt-lens {
    width: 16px;
    height: 16px;
    margin-left: 95px;
    flex: none;
}
.lt-slider {
    width: 100px;
    height: 5px;
    border-radius: 3px;
    background: #ddd;
    margin-left: 6px;
    position: relative;
    margin-bottom: 3px;
    flex: none;
}
.lt-slider i {
    position: absolute;
    left: 12px;
    top: -5px;
    width: 15px;
    height: 15px;
    border-radius: 50%;
    background: #aaa;
}
.lt-pct {
    margin-left: 3px;
}
.lab-body {
    height: 842px;
    flex: none;
    overflow: hidden;
    padding: 3px 0 0 12px;
    line-height: 16px;
    white-space: nowrap;
}
.steps {
    margin: 0;
    padding-left: 40px;
}
.steps li {
    margin-bottom: 14px;
}
.steps li:last-child {
    margin-bottom: 0;
}
.carry {
    list-style: none;
}
.lab-body h2 {
    font-size: 19.900px;
    line-height: 22px;
    margin: 20px 0 22px;
}
.lab-body h3 {
    font-size: 17.500px;
    line-height: 22px;
    margin: 17px 0 20px;
}
.lab-body p {
    margin: 0;
}
.steps2 {
    margin-top: 15px;
}
.shot-tabs {
    margin-top: 14px;
    height: 38px;
    background: #fafafa;
    border-bottom: 1px solid #777;
}
.st-row {
    height: 27px;
    display: flex;
    align-items: flex-end;
    font-size: 7.500px;
    color: #666;
    padding-left: 22px;
    background: linear-gradient(#fafafa 8px, #e6e6e6 8px);
}
.st-arrows {
    width: 20px;
    height: 19px;
    background: #e6e6e6;
    line-height: 19px;
    text-align: center;
    font-size: 8px;
    color: #bbb;
}
.st-tab {
    width: 58px;
    height: 19px;
    line-height: 19px;
    text-align: center;
    background: #f3f3f3;
}
.st-new {
    width: 44px;
    height: 19px;
    background: #fff;
    box-shadow: inset 0 -1px #f2d600;
    display: flex;
    align-items: center;
    justify-content: center;
}
.st-new span {
    width: 33px;
    height: 14px;
    border: 1px solid #b80000;
    box-shadow: inset 0 0 0 1px #b80000;
    font-size: 6.500px;
    line-height: 11px;
    text-align: center;
}
.st-add {
    width: 20px;
    height: 19px;
    background: #f2d600;
    color: #555;
    text-align: center;
    font-size: 12px;
    line-height: 18px;
}
.st-foot {
    font-size: 7px;
    line-height: 10px;
    color: #777;
    padding-left: 3px;
    background: #f6f6f6;
}
.shot-viz {
    margin-top: 14px;
    width: 182px;
    height: 196px;
    background: #f3f2f1;
    border: 1px solid #e0e0e0;
    font-family: Roboto, sans-serif;
}
.sv-head {
    height: 53px;
    padding: 0 12px 5px 12px;
    display: flex;
    align-items: center;
    justify-content: space-between;
    font-size: 15.500px;
    font-weight: 500;
    color: #3b3a4a;
}
.sv-head svg {
    width: 12px;
    height: 12px;
    color: #333;
    margin-top: -4px;
}
.sv-grid {
    padding-left: 4px;
}
.sv-hl {
    width: 32px;
    height: 32px;
    border: 4px solid #b00000;
    display: flex;
    align-items: center;
    justify-content: center;
    z-index: 1;
}
.shot-next {
    margin-top: 14px;
    height: 30px;
    border: 2px solid #777;
    padding: 6px 4px;
}
.shot-next div {
    height: 30px;
    background: #4b54c0;
}
.lab-bottom {
    height: 25px;
    flex: none;
    background: #eee;
    display: flex;
    justify-content: flex-end;
}
.lab-bottom span {
    width: 46px;
    background: #ccc;
}
```
